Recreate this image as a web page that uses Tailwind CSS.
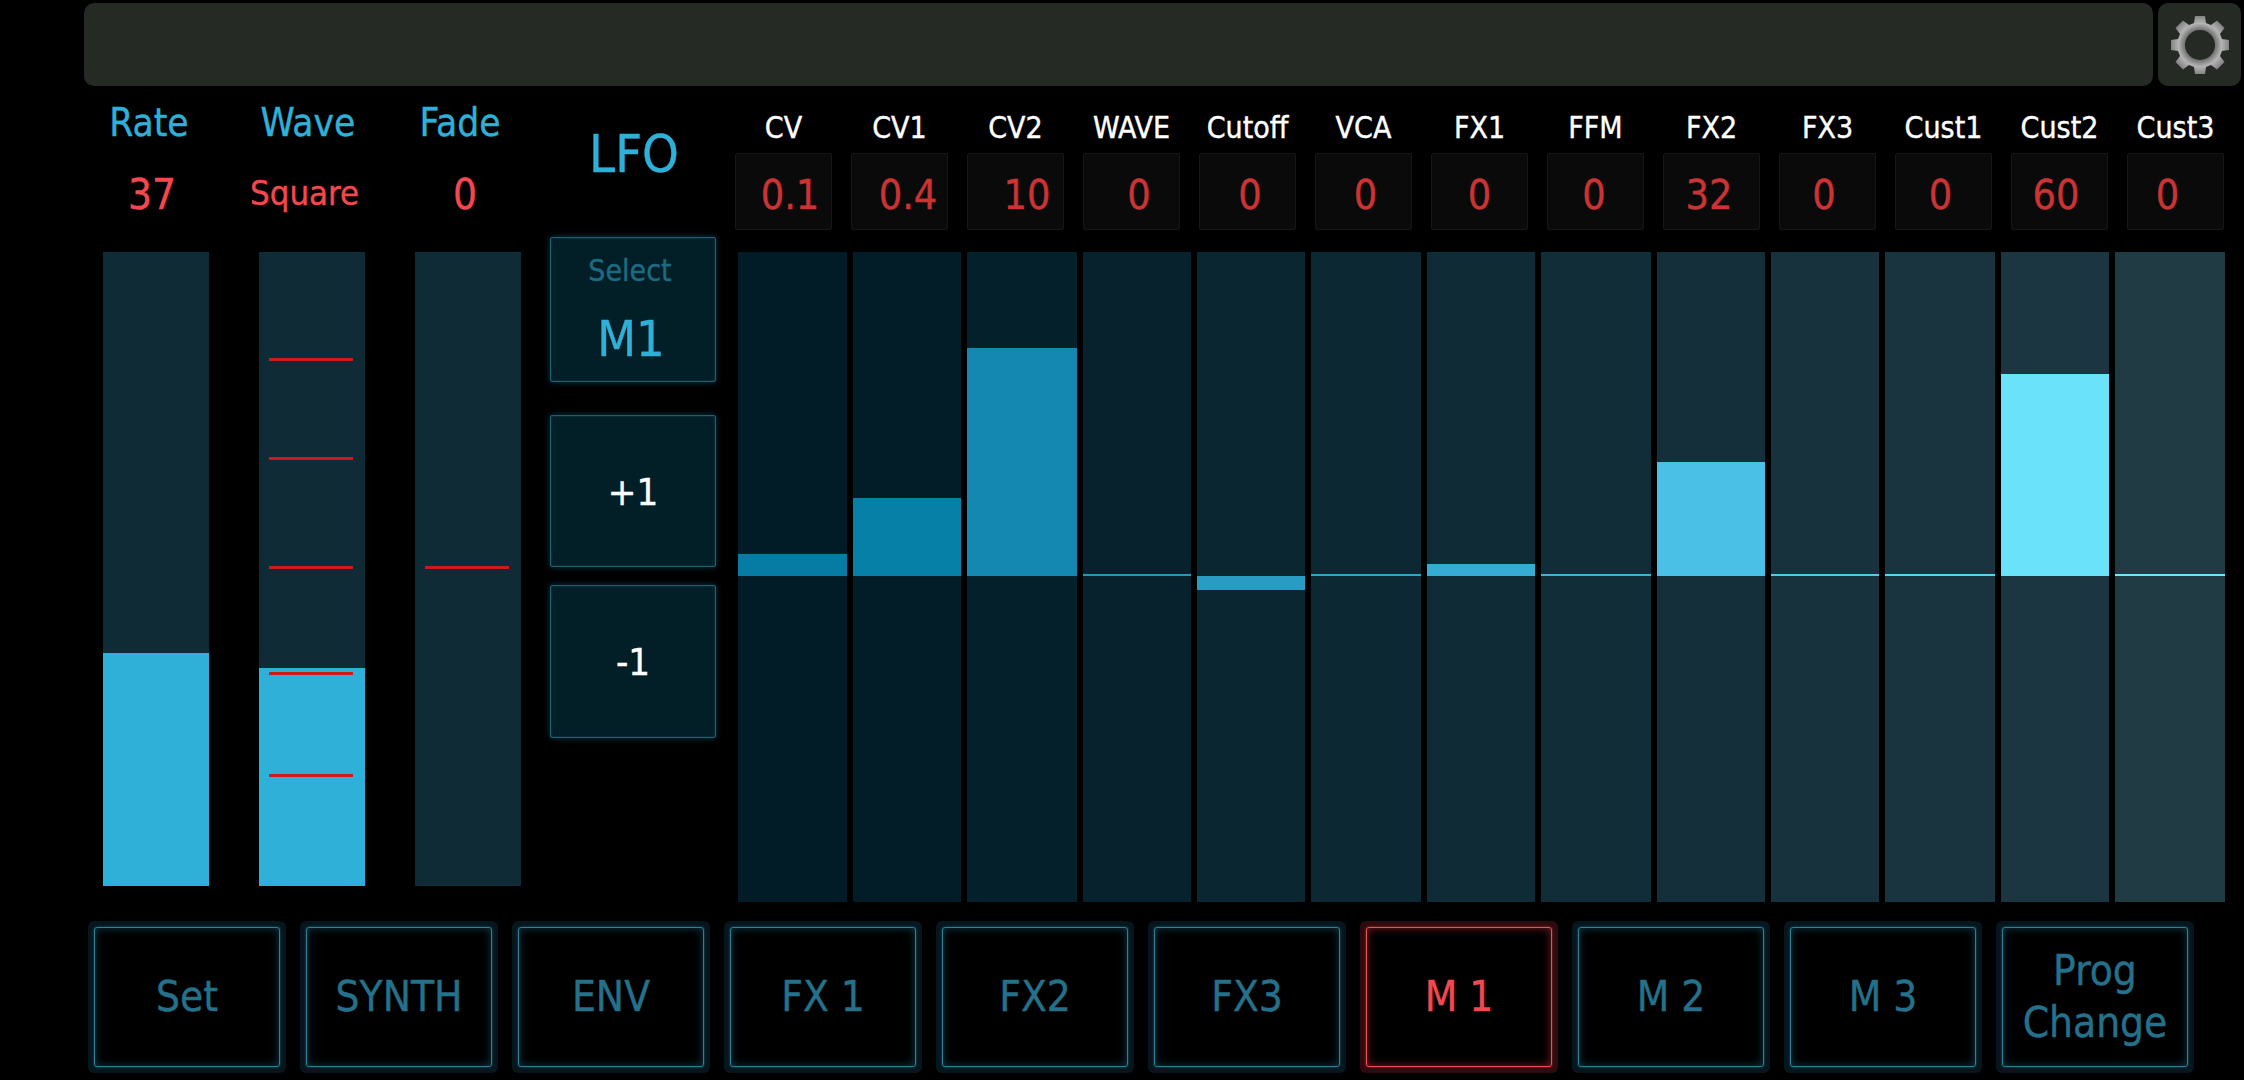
<!doctype html>
<html>
<head>
<meta charset="utf-8">
<script src="https://cdn.jsdelivr.net/npm/@tailwindcss/browser@4"></script>
</head>
<body class="bg-black">
<div class="w-[2244px] h-[1080px] bg-black overflow-hidden flex flex-col [font-family:'DejaVu_Sans',sans-serif] font-stretch-condensed [-webkit-text-stroke:0.4px]">

  <!-- top bar -->
  <header class="flex gap-[5px] pl-[84px] pt-[3px] h-[86px]">
    <div class="w-[2069px] h-[83px] rounded-[10px] bg-[#252b24]"></div>
    <button class="w-[83px] h-[83px] rounded-[10px] bg-[#252b24] flex items-center justify-center">
      <svg width="60" height="60" viewBox="-30 -30 60 60">
        <defs>
          <radialGradient id="g" cx="0" cy="0" r="30" gradientUnits="userSpaceOnUse">
            <stop offset="0.5" stop-color="#6f6f6f"/>
            <stop offset="0.72" stop-color="#b4b4b4"/>
            <stop offset="1" stop-color="#7e7e7e"/>
          </radialGradient>
        </defs>
        <path fill="url(#g)" fill-rule="evenodd" d="M-5 -29 L5 -29 L6 -22 L11 -20 L17 -24.5 L24.5 -17 L20 -11 L22 -6 L29 -5 L29 5 L22 6 L20 11 L24.5 17 L17 24.5 L11 20 L6 22 L5 29 L-5 29 L-6 22 L-11 20 L-17 24.5 L-24.5 17 L-20 11 L-22 6 L-29 5 L-29 -5 L-22 -6 L-20 -11 L-24.5 -17 L-17 -24.5 L-11 -20 L-6 -22 Z M15 0 A15 15 0 1 0 -15 0 A15 15 0 1 0 15 0 Z"/>
      </svg>
    </button>
  </header>

  <!-- main -->
  <main class="flex h-[835px] pl-[103px]">
    <!-- left sliders -->
    <div class="flex gap-[50px] w-[418px] shrink-0">
      <section class="w-[106px] flex flex-col">
        <div class="h-[60px] pt-[15px] text-[38.5px] leading-[44px] text-[#2fb0d8] text-center -translate-x-[7px]">Rate</div>
        <div class="h-[106px] pt-[25px] text-[42px] leading-[48px] text-[#f5484e] text-center -translate-x-[4px]">37</div>
        <div class="relative w-[106px] h-[634px] bg-[#0f2b36] flex flex-col justify-end">
          <div class="h-[233px] bg-[#2fb0d8]"></div>
        </div>
      </section>
      <section class="w-[106px] flex flex-col">
        <div class="h-[60px] pt-[15px] text-[38.5px] leading-[44px] text-[#2fb0d8] text-center -translate-x-[4px]">Wave</div>
        <div class="h-[106px] pt-[25px] text-[34.5px] leading-[44px] text-[#f5484e] text-center -translate-x-[9px] whitespace-nowrap">Square</div>
        <div class="relative w-[106px] h-[634px] bg-[#0f2b36] flex flex-col justify-end">
          <div class="h-[218px] bg-[#2fb0d8]"></div>
          <div class="absolute left-[10px] w-[84px] h-[3px] top-[106px] bg-[#cc1a1e]"></div>
          <div class="absolute left-[10px] w-[84px] h-[3px] top-[205px] bg-[#cc1a1e]"></div>
          <div class="absolute left-[10px] w-[84px] h-[3px] top-[314px] bg-[#cc1a1e]"></div>
          <div class="absolute left-[10px] w-[84px] h-[3px] top-[420px] bg-[#cc1a1e]"></div>
          <div class="absolute left-[10px] w-[84px] h-[3px] top-[522px] bg-[#cc1a1e]"></div>
        </div>
      </section>
      <section class="w-[106px] flex flex-col">
        <div class="h-[60px] pt-[15px] text-[38.5px] leading-[44px] text-[#2fb0d8] text-center -translate-x-[8px]">Fade</div>
        <div class="h-[106px] pt-[25px] text-[42px] leading-[48px] text-[#f5484e] text-center -translate-x-[3px]">0</div>
        <div class="relative w-[106px] h-[634px] bg-[#0f2b36]">
          <div class="absolute left-[10px] w-[84px] h-[3px] top-[314px] bg-[#cc1a1e]"></div>
        </div>
      </section>
    </div>

    <!-- LFO column -->
    <div class="w-[166px] ml-[29px] shrink-0 flex flex-col">
      <div class="h-[151px] pt-[38px] text-[52px] leading-[60px] text-[#2fb0d8] text-center translate-x-[1px]">LFO</div>
      <div class="h-[145px] rounded-[2px] border border-[#1f5f74] bg-[#021e27] shadow-[0_0_6px_#0d3a4a,inset_0_0_2px_#1a5060] flex flex-col items-center">
        <div class="mt-[15px] text-[30px] leading-[36px] text-[#1d6a82] -translate-x-[3px]">Select</div>
        <div class="mt-[21px] text-[50px] leading-[58px] text-[#2fb0d8] -translate-x-[2px]">M1</div>
      </div>
      <button class="mt-[33px] h-[152px] pt-[2px] rounded-[2px] border border-[#1f5f74] bg-[#021e27] shadow-[0_0_6px_#0d3a4a,inset_0_0_2px_#1a5060] text-white text-[38px] leading-none">+1</button>
      <button class="mt-[18px] h-[153px] rounded-[2px] border border-[#1f5f74] bg-[#021e27] shadow-[0_0_6px_#0d3a4a,inset_0_0_2px_#1a5060] text-white text-[38px] leading-none">-1</button>
    </div>

    <!-- mixer -->
    <div class="w-[1492px] ml-[19px] shrink-0 flex flex-col">
      <div class="grid grid-cols-13 gap-x-[19px] w-[1489px]">
        <div class="h-[67px] pt-[24px] text-[30px] leading-[36px] text-white text-center">CV</div>
        <div class="h-[67px] pt-[24px] text-[30px] leading-[36px] text-white text-center">CV1</div>
        <div class="h-[67px] pt-[24px] text-[30px] leading-[36px] text-white text-center">CV2</div>
        <div class="h-[67px] pt-[24px] text-[30px] leading-[36px] text-white text-center">WAVE</div>
        <div class="h-[67px] pt-[24px] text-[30px] leading-[36px] text-white text-center">Cutoff</div>
        <div class="h-[67px] pt-[24px] text-[30px] leading-[36px] text-white text-center">VCA</div>
        <div class="h-[67px] pt-[24px] text-[30px] leading-[36px] text-white text-center">FX1</div>
        <div class="h-[67px] pt-[24px] text-[30px] leading-[36px] text-white text-center">FFM</div>
        <div class="h-[67px] pt-[24px] text-[30px] leading-[36px] text-white text-center">FX2</div>
        <div class="h-[67px] pt-[24px] text-[30px] leading-[36px] text-white text-center">FX3</div>
        <div class="h-[67px] pt-[24px] text-[30px] leading-[36px] text-white text-center">Cust1</div>
        <div class="h-[67px] pt-[24px] text-[30px] leading-[36px] text-white text-center">Cust2</div>
        <div class="h-[67px] pt-[24px] text-[30px] leading-[36px] text-white text-center">Cust3</div>
      </div>
      <div class="grid grid-cols-13 gap-x-[19px] w-[1489px]">
        <div class="h-[77px] flex items-center justify-center pt-[8px] bg-[#0a0a0a] border border-[#161616] rounded-[2px] text-[41px] text-[#cc3333] whitespace-nowrap pl-[13px]">0.1</div>
        <div class="h-[77px] flex items-center justify-center pt-[8px] bg-[#0a0a0a] border border-[#161616] rounded-[2px] text-[41px] text-[#cc3333] whitespace-nowrap pl-[17px]">0.4</div>
        <div class="h-[77px] flex items-center justify-center pt-[8px] bg-[#0a0a0a] border border-[#161616] rounded-[2px] text-[41px] text-[#cc3333] whitespace-nowrap pl-[23px]">10</div>
        <div class="h-[77px] flex items-center justify-center pt-[8px] bg-[#0a0a0a] border border-[#161616] rounded-[2px] text-[41px] text-[#cc3333] whitespace-nowrap pl-[15px]">0</div>
        <div class="h-[77px] flex items-center justify-center pt-[8px] bg-[#0a0a0a] border border-[#161616] rounded-[2px] text-[41px] text-[#cc3333] whitespace-nowrap pl-[5px]">0</div>
        <div class="h-[77px] flex items-center justify-center pt-[8px] bg-[#0a0a0a] border border-[#161616] rounded-[2px] text-[41px] text-[#cc3333] whitespace-nowrap pl-[4px]">0</div>
        <div class="h-[77px] flex items-center justify-center pt-[8px] bg-[#0a0a0a] border border-[#161616] rounded-[2px] text-[41px] text-[#cc3333] whitespace-nowrap">0</div>
        <div class="h-[77px] flex items-center justify-center pt-[8px] bg-[#0a0a0a] border border-[#161616] rounded-[2px] text-[41px] text-[#cc3333] whitespace-nowrap pr-[3px]">0</div>
        <div class="h-[77px] flex items-center justify-center pt-[8px] bg-[#0a0a0a] border border-[#161616] rounded-[2px] text-[41px] text-[#cc3333] whitespace-nowrap pr-[5px]">32</div>
        <div class="h-[77px] flex items-center justify-center pt-[8px] bg-[#0a0a0a] border border-[#161616] rounded-[2px] text-[41px] text-[#cc3333] whitespace-nowrap pr-[7px]">0</div>
        <div class="h-[77px] flex items-center justify-center pt-[8px] bg-[#0a0a0a] border border-[#161616] rounded-[2px] text-[41px] text-[#cc3333] whitespace-nowrap pr-[6px]">0</div>
        <div class="h-[77px] flex items-center justify-center pt-[8px] bg-[#0a0a0a] border border-[#161616] rounded-[2px] text-[41px] text-[#cc3333] whitespace-nowrap pr-[7px]">60</div>
        <div class="h-[77px] flex items-center justify-center pt-[8px] bg-[#0a0a0a] border border-[#161616] rounded-[2px] text-[41px] text-[#cc3333] whitespace-nowrap pr-[16px]">0</div>
      </div>
      <div class="grid grid-cols-[109px_108px_110px_108px_108px_110px_108px_110px_108px_108px_110px_108px_110px] gap-x-[6px] w-[1487px] ml-[3px] mt-[22px]">
        <div class="relative h-[650px] bg-[#011c26]"><div class="absolute inset-x-0 top-[302px] h-[22px] bg-[#067ba3]"></div></div>
        <div class="relative h-[650px] bg-[#021d28]"><div class="absolute inset-x-0 top-[246px] h-[78px] bg-[#0780a8]"></div></div>
        <div class="relative h-[650px] bg-[#04202b]"><div class="absolute inset-x-0 top-[96px] h-[228px] bg-[#1488b0]"></div></div>
        <div class="relative h-[650px] bg-[#07222d]"><div class="absolute inset-x-0 top-[322px] h-[2px] bg-[#2596bc]"></div></div>
        <div class="relative h-[650px] bg-[#0a2630]"><div class="absolute inset-x-0 top-[324px] h-[14px] bg-[#2a9cc4]"></div></div>
        <div class="relative h-[650px] bg-[#0c2833]"><div class="absolute inset-x-0 top-[322px] h-[2px] bg-[#30a4cc]"></div></div>
        <div class="relative h-[650px] bg-[#0f2b36]"><div class="absolute inset-x-0 top-[312px] h-[12px] bg-[#36acd5]"></div></div>
        <div class="relative h-[650px] bg-[#112d38]"><div class="absolute inset-x-0 top-[322px] h-[2px] bg-[#3eb4dc]"></div></div>
        <div class="relative h-[650px] bg-[#142f3a]"><div class="absolute inset-x-0 top-[210px] h-[114px] bg-[#4ac0e6]"></div></div>
        <div class="relative h-[650px] bg-[#17323c]"><div class="absolute inset-x-0 top-[322px] h-[2px] bg-[#52c8ec]"></div></div>
        <div class="relative h-[650px] bg-[#19343f]"><div class="absolute inset-x-0 top-[322px] h-[2px] bg-[#5ad2f2]"></div></div>
        <div class="relative h-[650px] bg-[#1b3641]"><div class="absolute inset-x-0 top-[122px] h-[202px] bg-[#6ae2fa]"></div></div>
        <div class="relative h-[650px] bg-[#203b43]"><div class="absolute inset-x-0 top-[322px] h-[2px] bg-[#70e6fc]"></div></div>
      </div>
    </div>
  </main>

  <!-- footer tabs -->
  <footer class="flex gap-[14px] pl-[88px] h-[152px]">
    <button class="w-[198px] h-[152px] p-[6px] rounded-[6px] bg-[#06161c]"><span class="flex items-center justify-center w-full h-full rounded-[3px] bg-black border border-[#2f7f98] shadow-[0_0_3px_#1a5568,inset_0_0_8px_#0e3a4a] text-[42px] leading-[50px] text-[#25708a]">Set</span></button>
    <button class="w-[198px] h-[152px] p-[6px] rounded-[6px] bg-[#06161c]"><span class="flex items-center justify-center w-full h-full rounded-[3px] bg-black border border-[#2f7f98] shadow-[0_0_3px_#1a5568,inset_0_0_8px_#0e3a4a] text-[42px] leading-[50px] text-[#25708a]">SYNTH</span></button>
    <button class="w-[198px] h-[152px] p-[6px] rounded-[6px] bg-[#06161c]"><span class="flex items-center justify-center w-full h-full rounded-[3px] bg-black border border-[#2f7f98] shadow-[0_0_3px_#1a5568,inset_0_0_8px_#0e3a4a] text-[42px] leading-[50px] text-[#25708a]">ENV</span></button>
    <button class="w-[198px] h-[152px] p-[6px] rounded-[6px] bg-[#06161c]"><span class="flex items-center justify-center w-full h-full rounded-[3px] bg-black border border-[#2f7f98] shadow-[0_0_3px_#1a5568,inset_0_0_8px_#0e3a4a] text-[42px] leading-[50px] text-[#25708a]">FX 1</span></button>
    <button class="w-[198px] h-[152px] p-[6px] rounded-[6px] bg-[#06161c]"><span class="flex items-center justify-center w-full h-full rounded-[3px] bg-black border border-[#2f7f98] shadow-[0_0_3px_#1a5568,inset_0_0_8px_#0e3a4a] text-[42px] leading-[50px] text-[#25708a]">FX2</span></button>
    <button class="w-[198px] h-[152px] p-[6px] rounded-[6px] bg-[#06161c]"><span class="flex items-center justify-center w-full h-full rounded-[3px] bg-black border border-[#2f7f98] shadow-[0_0_3px_#1a5568,inset_0_0_8px_#0e3a4a] text-[42px] leading-[50px] text-[#25708a]">FX3</span></button>
    <button class="w-[198px] h-[152px] p-[6px] rounded-[6px] bg-[#2d0b0e]"><span class="flex items-center justify-center w-full h-full rounded-[3px] bg-black border border-[#ee5056] shadow-[0_0_3px_#a02c30,inset_0_0_8px_#7a1c20] text-[42px] leading-[50px] text-[#f04a50]">M 1</span></button>
    <button class="w-[198px] h-[152px] p-[6px] rounded-[6px] bg-[#06161c]"><span class="flex items-center justify-center w-full h-full rounded-[3px] bg-black border border-[#2f7f98] shadow-[0_0_3px_#1a5568,inset_0_0_8px_#0e3a4a] text-[42px] leading-[50px] text-[#25708a]">M 2</span></button>
    <button class="w-[198px] h-[152px] p-[6px] rounded-[6px] bg-[#06161c]"><span class="flex items-center justify-center w-full h-full rounded-[3px] bg-black border border-[#2f7f98] shadow-[0_0_3px_#1a5568,inset_0_0_8px_#0e3a4a] text-[42px] leading-[50px] text-[#25708a]">M 3</span></button>
    <button class="w-[198px] h-[152px] p-[6px] rounded-[6px] bg-[#06161c]"><span class="flex items-center justify-center w-full h-full rounded-[3px] bg-black border border-[#2f7f98] shadow-[0_0_3px_#1a5568,inset_0_0_8px_#0e3a4a] text-[42px] leading-[52px] text-[#25708a] text-center">Prog<br>Change</span></button>
  </footer>
</div>
</body>
</html>
